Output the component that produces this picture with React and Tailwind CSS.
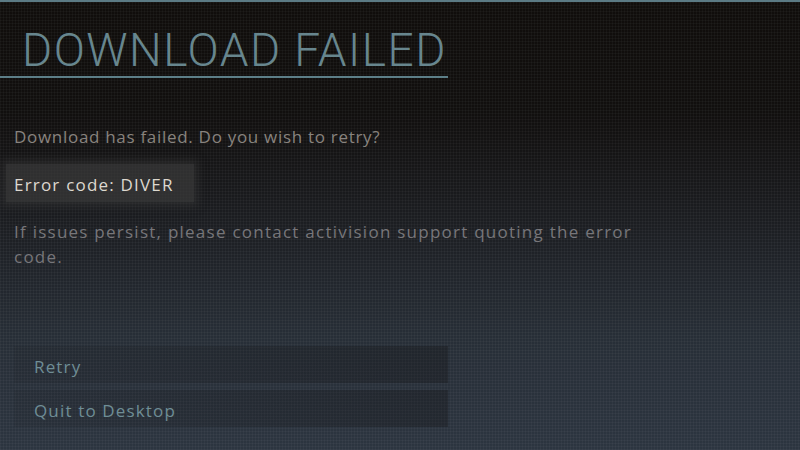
import React from 'react';

export default function App() {
    return (
        <div className="relative w-[800px] h-[450px] overflow-hidden bg-[linear-gradient(180deg,#100d0b_0%,#110f0e_25%,#1c1e22_50%,#272e37_75%,#2c3540_100%)] font-['Open_Sans',sans-serif]">
            <div className="absolute inset-0 bg-[linear-gradient(90deg,rgba(255,255,255,0.03)_1px,transparent_1px),linear-gradient(0deg,rgba(255,255,255,0.03)_1px,transparent_1px)] bg-[length:3px_3px]"></div>
            <div className="relative flex flex-col h-full border-t-2 border-[#5b7a84]">
                <div className="w-[448px] border-b-2 border-[#5d7f88] pl-[22px] pt-[22px] pb-[0px]">
                    <h1 className="font-['Roboto',sans-serif] whitespace-nowrap text-[46px] leading-[52px] font-light text-[#67868e] tracking-[1.5px]">DOWNLOAD FAILED</h1>
                </div>

                <p className="mt-[47px] ml-[14px] text-[17px] leading-[24px] tracking-[0.7px] text-[#88837e]">Download has failed. Do you wish to retry?</p>

                <div className="mt-[15px] ml-[6px] w-[188px] h-[38px] flex items-center pl-[8px] pt-[3px] bg-[#3a3a3a]/70 shadow-[0_0_8px_4px_rgba(58,58,58,0.5)]">
                    <span className="text-[17px] tracking-[1.2px] text-[#ddd8cf]">Error code: DIVER</span>
                </div>

                <p className="mt-[17px] ml-[14px] w-[625px] text-[17px] leading-[25px] tracking-[1.25px] text-[#77767a]">
                    If issues persist, please contact activision support quoting the error code.
                </p>

                <div className="mt-auto mb-[23px] ml-[14px] w-[434px] flex flex-col gap-[7px]">
                    <button className="h-[37px] text-left pl-[20px] pt-[4px] text-[17px] tracking-[1.15px] text-[#6f8d95] bg-[linear-gradient(90deg,rgba(20,20,22,0.1),rgba(20,20,22,0.35))]">Retry</button>
                    <button className="h-[37px] text-left pl-[20px] pt-[4px] text-[17px] tracking-[1.15px] text-[#6f8d95] bg-[linear-gradient(90deg,rgba(20,20,22,0.1),rgba(20,20,22,0.35))]">Quit to Desktop</button>
                </div>
            </div>
        </div>
    );
}
